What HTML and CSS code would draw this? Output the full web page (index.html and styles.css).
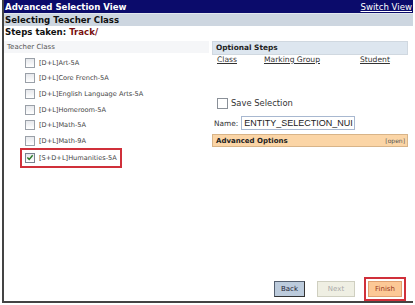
FILE: index.html
```html
<!DOCTYPE html>
<html>
<head>
<meta charset="utf-8">
<link rel="stylesheet" href="styles.css">
</head>
<body>
<div class="frame">
  <div class="titlebar">
    <span class="title">Advanced Selection View</span>
    <a class="switch">Switch View</a>
  </div>
  <div class="subbar">Selecting Teacher Class</div>
  <div class="steps">Steps taken: <span class="track">Track/</span></div>
  <div class="main">
    <div class="left">
      <div class="lefthead">Teacher Class</div>
      <ul class="list">
        <li><span class="cb"></span>[D+L]Art-5A</li>
        <li><span class="cb"></span>[D+L]Core French-5A</li>
        <li><span class="cb"></span>[D+L]English Language Arts-5A</li>
        <li><span class="cb"></span>[D+L]Homeroom-5A</li>
        <li><span class="cb"></span>[D+L]Math-5A</li>
        <li><span class="cb"></span>[D+L]Math-9A</li>
        <li class="selected"><span class="cb checked"><svg width="9" height="9" viewBox="0 0 9 9"><path d="M1.5 4.5 L3.6 6.6 L7.5 2" fill="none" stroke="#2a7a2a" stroke-width="1.6"/></svg></span>[S+D+L]Humanities-5A</li>
      </ul>
    </div>
    <div class="right">
      <div class="righthead">Optional Steps</div>
      <div class="links">
        <a class="l1">Class</a>
        <a class="l2">Marking Group</a>
        <a class="l3">Student</a>
      </div>
      <label class="save"><span class="cb big"></span>Save Selection</label>
      <div class="name">Name: <span class="input">ENTITY_SELECTION_NUI</span></div>
      <div class="adv"><span class="advt">Advanced Options</span><span class="open">[open]</span></div>
    </div>
  </div>
  <div class="buttons">
    <span class="btn back">Back</span>
    <span class="btn next">Next</span>
    <span class="finishwrap"><span class="btn finish">Finish</span></span>
  </div>
</div>
</body>
</html>
```
FILE: styles.css
```css
html, body { margin: 0; padding: 0; background: #fff; }
body { width: 415px; height: 305px; overflow: hidden; font-family: "DejaVu Sans", Verdana, sans-serif; }
.frame {
  margin-left: 2px;
  width: 411px;
  height: 303px;
  border-left: 2px solid #444;
  border-bottom: 2px solid #444;
  box-sizing: border-box;
  display: flex;
  flex-direction: column;
  position: relative;
}
.titlebar {
  background: #0b0b6b;
  height: 13px;
  display: flex;
  justify-content: space-between;
  align-items: center;
  padding: 0 1px 0 1px;
  color: #fff;
}
.title { font-weight: bold; font-size: 8.6px; }
.switch { color: #fff; text-decoration: underline; font-size: 8.6px; }
.subbar {
  background: #cdd6e0;
  height: 12px;
  line-height: 12px;
  font-weight: bold;
  font-size: 8.6px;
  padding-left: 1px;
  color: #111;
  border-top: 1px solid #e2e8ee;
}
.steps {
  height: 13px;
  line-height: 13px;
  font-weight: bold;
  font-size: 8.6px;
  padding-left: 1px;
  color: #111;
}
.track { color: #7a1010; }
.main {
  display: flex;
  flex: 1;
  margin-top: 2px;
  padding-right: 5px;
}
.left { width: 205px; }
.lefthead {
  background: #f5f6f8;
  height: 12px;
  line-height: 12px;
  font-size: 7px;
  color: #555;
  padding-left: 3px;
}
.list { list-style: none; margin: 0; padding: 2px 0 0 18px; }
.list li {
  height: 15.6px;
  display: flex;
  align-items: center;
  font-size: 6.6px;
  color: #444;
  width: max-content;
  padding: 0 3px;
}
.cb {
  width: 10px; height: 10px;
  border: 1px solid #9aa0a8;
  background: linear-gradient(#e6e8ec, #fff);
  margin-right: 4px;
  display: inline-flex;
  align-items: center;
  justify-content: center;
  box-sizing: border-box;
}
.cb.checked { border-color: #7a8290; }
.list li.selected {
  outline: 2px solid #d0303a;
  outline-offset: 0px;
  margin-top: 1px;
  height: 16px;
}
.right { margin-left: 3px; flex: 1; }
.righthead {
  background: #dde6ef;
  height: 12px;
  line-height: 12px;
  font-size: 7.4px;
  font-weight: bold;
  color: #222;
  padding-left: 3px;
  border: 1px solid #d0d8e0;
}
.links {
  display: flex;
  font-size: 7.6px;
  color: #333;
  height: 10px;
  line-height: 10px;
}
.links a { text-decoration: underline; }
.l1 { margin-left: 5px; }
.l2 { margin-left: 27px; }
.l3 { margin-left: 40px; }
.save {
  display: flex;
  align-items: center;
  margin-top: 32px;
  margin-left: 5px;
  font-size: 8.4px;
  color: #333;
  height: 12px;
}
.cb.big { width: 11px; height: 11px; border-color: #8a9098; background: #fff; margin-right: 3px; }
.name {
  display: flex;
  align-items: center;
  margin-top: 7px;
  font-size: 7.4px;
  color: #333;
  padding-left: 2px;
}
.input {
  margin-left: 3px;
  border: 1px solid #a8b8d0;
  width: 114px;
  height: 14px;
  box-sizing: border-box;
  font-family: "Liberation Sans", Arial, sans-serif;
  font-size: 9px;
  line-height: 12px;
  padding-left: 2px;
  color: #222;
  overflow: hidden;
  white-space: nowrap;
}
.adv {
  margin-top: 4px;
  background: #fbd5a6;
  border: 1px solid #d8b488;
  height: 13px;
  display: flex;
  justify-content: space-between;
  align-items: center;
  padding: 0 2px 0 3px;
  box-sizing: border-box;
}
.advt { font-weight: bold; font-size: 7px; color: #222; }
.open { font-size: 6px; color: #555; }
.buttons {
  display: flex;
  justify-content: flex-end;
  align-items: flex-end;
  padding: 0 7px 0 0;
  height: 26px;
  gap: 12px;
}
.btn {
  display: inline-flex;
  align-items: center;
  justify-content: center;
  width: 31px;
  height: 16px;
  font-size: 7px;
  box-sizing: border-box;
}
.back { background: #bccbdc; border: 1px solid #556070; border-right-color: #333; border-bottom-color: #333; color: #223; margin-bottom: 4px; }
.next { background: #efefe3; border: 1px solid #cfcfc0; color: #aaa; width: 38px; margin-bottom: 4px; }
.finishwrap { border: 2px solid #d0303a; padding: 2px 2px 2px 2px; display: inline-flex; margin-left: -3px; }
.finish { background: #fcc896; border: 1px solid #e0a070; color: #9a3a20; width: 34px; }
```
